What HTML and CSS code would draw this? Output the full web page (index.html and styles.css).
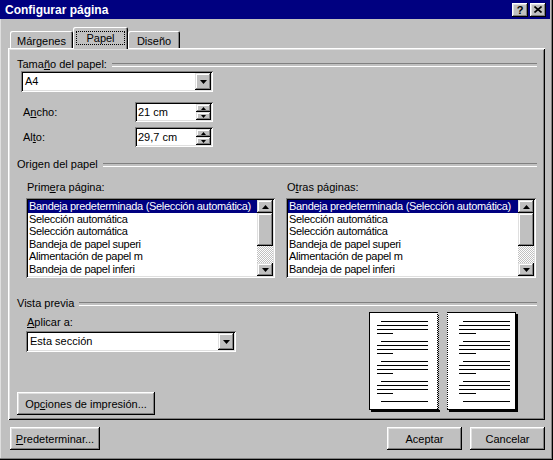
FILE: index.html
```html
<!DOCTYPE html>
<html lang="es">
<head>
    <meta charset="UTF-8">
    <title>Configurar página</title>
    <link rel="stylesheet" href="styles.css">
</head>
<body>
<div class="window">
    <div class="titlebar">
        <span class="title">Configurar página</span>
        <div class="title-buttons">
            <span class="title-btn">?</span>
            <span class="title-btn">
                <svg width="8" height="7" viewBox="0 0 8 7"><path d="M0.5 0.5L7.5 6.5M7.5 0.5L0.5 6.5" stroke="#000" stroke-width="1.6"/></svg>
            </span>
        </div>
    </div>

    <div class="dialog">
        <div class="tabs">
            <div class="tab tab-margenes">Márgenes</div>
            <div class="tab tab-papel active"><span class="focus">Papel</span></div>
            <div class="tab tab-diseno">Diseño</div>
        </div>

        <div class="panel">
            <!-- Tamaño del papel -->
            <div class="group-title">Tama<u>ñ</u>o del papel:</div>
            <div class="combo size-combo">
                <span class="combo-text">A4</span>
                <span class="drop-btn"><svg width="7" height="4"><path d="M0 0h7L3.5 4z"/></svg></span>
            </div>
            <div class="field-row first">
                <label>A<u>n</u>cho:</label>
                <div class="spin">
                    <span class="spin-text">21 cm</span>
                    <span class="spin-btns">
                        <span><svg width="5" height="3"><path d="M2.5 0L5 3H0z"/></svg></span>
                        <span><svg width="5" height="3"><path d="M0 0h5L2.5 3z"/></svg></span>
                    </span>
                </div>
            </div>
            <div class="field-row second">
                <label>Al<u>t</u>o:</label>
                <div class="spin">
                    <span class="spin-text">29,7 cm</span>
                    <span class="spin-btns">
                        <span><svg width="5" height="3"><path d="M2.5 0L5 3H0z"/></svg></span>
                        <span><svg width="5" height="3"><path d="M0 0h5L2.5 3z"/></svg></span>
                    </span>
                </div>
            </div>

            <!-- Origen del papel -->
            <div class="group-title origin">Origen del papel</div>
            <div class="sources">
                <div class="source first-page">
                    <div class="source-label">Prim<u>e</u>ra página:</div>
                    <div class="listbox">
                        <div class="list-items">
                            <div class="selected">Bandeja predeterminada (Selección automática)</div>
                            <div>Selección automática</div>
                            <div>Selección automática</div>
                            <div>Bandeja de papel superi</div>
                            <div>Alimentación de papel m</div>
                            <div>Bandeja de papel inferi</div>
                        </div>
                        <div class="vscroll">
                            <span class="sb-btn"><svg width="7" height="4"><path d="M3.5 0L7 4H0z"/></svg></span>
                            <span class="sb-thumb"></span>
                            <span class="sb-track"></span>
                            <span class="sb-btn"><svg width="7" height="4"><path d="M0 0h7L3.5 4z"/></svg></span>
                        </div>
                    </div>
                </div>
                <div class="source other-pages">
                    <div class="source-label">O<u>t</u>ras páginas:</div>
                    <div class="listbox">
                        <div class="list-items">
                            <div class="selected">Bandeja predeterminada (Selección automática)</div>
                            <div>Selección automática</div>
                            <div>Selección automática</div>
                            <div>Bandeja de papel superi</div>
                            <div>Alimentación de papel m</div>
                            <div>Bandeja de papel inferi</div>
                        </div>
                        <div class="vscroll">
                            <span class="sb-btn"><svg width="7" height="4"><path d="M3.5 0L7 4H0z"/></svg></span>
                            <span class="sb-thumb"></span>
                            <span class="sb-track"></span>
                            <span class="sb-btn"><svg width="7" height="4"><path d="M0 0h7L3.5 4z"/></svg></span>
                        </div>
                    </div>
                </div>
            </div>

            <!-- Vista previa -->
            <div class="group-title preview-title">Vista previa</div>
            <div class="preview-area">
                <div class="apply-col">
                    <div class="apply-label"><u>A</u>plicar a:</div>
                    <div class="combo apply-combo">
                        <span class="combo-text">Esta sección</span>
                        <span class="drop-btn"><svg width="7" height="4"><path d="M0 0h7L3.5 4z"/></svg></span>
                    </div>
                    <div class="btn print-options">Op<u>c</u>iones de impresión...</div>
                </div>
                <svg class="pages" width="150" height="100" viewBox="0 0 150 100">
                    <!-- página izquierda -->
                    <rect x="2" y="98" width="69" height="2" fill="#000"/>
                    <rect x="0" y="0" width="69" height="98" fill="#fff"/>
                    <path d="M0 0.5H69M0.5 0V98M0 97.5H69" stroke="#000" fill="none"/>
                    <path d="M68.5 0V98" stroke="#000" stroke-dasharray="1 1"/>
                    <path d="M69.5 2V100" stroke="#000" stroke-dasharray="1 1" stroke-dashoffset="1"/>
                    <g stroke="#000">
                        <path d="M12 9.5H59M8 13.5H59M8 17.5H59M8 21.5H24"/>
                        <path d="M12 29.5H59M8 33.5H59M8 37.5H59M8 41.5H24"/>
                        <path d="M12 49.5H59M8 53.5H59M8 57.5H59M8 61.5H24"/>
                        <path d="M12 69.5H59M8 73.5H59M8 77.5H59M8 81.5H24"/>
                        <path d="M12 89.5H59"/>
                    </g>
                    <!-- página derecha -->
                    <rect x="80" y="2" width="69" height="98" fill="#000"/>
                    <rect x="78" y="0" width="69" height="98" fill="#fff"/>
                    <path d="M78 0.5H147M146.5 0V98M78 97.5H147" stroke="#000" fill="none"/>
                    <path d="M78.5 0V98" stroke="#000" stroke-dasharray="1 1"/>
                    <g stroke="#000">
                        <path d="M94 9.5H141M90 13.5H141M90 17.5H141M90 21.5H107"/>
                        <path d="M94 29.5H141M90 33.5H141M90 37.5H141M90 41.5H107"/>
                        <path d="M94 49.5H141M90 53.5H141M90 57.5H141M90 61.5H107"/>
                        <path d="M94 69.5H141M90 73.5H141M90 77.5H141M90 81.5H107"/>
                        <path d="M94 89.5H141"/>
                    </g>
                </svg>
            </div>
        </div>

        <div class="buttons">
            <div class="btn btn-default"><u>P</u>redeterminar...</div>
            <div class="btn btn-ok">Aceptar</div>
            <div class="btn btn-cancel">Cancelar</div>
        </div>
    </div>
</div>
</body>
</html>
```

FILE: styles.css
```css
* {
    box-sizing: border-box;
}

body {
    margin: 0;
    background: #c0c0c0;
    font-family: "Liberation Sans", Arial, sans-serif;
    font-size: 11px;
    color: #000;
}

u {
    text-decoration: underline;
    text-underline-offset: 1px;
}

.window {
    width: 553px;
    height: 460px;
    padding: 0 3px 3px 0;
    background: #c0c0c0;
    box-shadow: inset -1px -1px #000, inset -2px -2px #808080, inset 1px 0 #dfdfdf;
    display: flex;
    flex-direction: column;
}

/* barra de titulo */
.titlebar {
    height: 19px;
    background: #000080;
    color: #fff;
    display: flex;
    align-items: center;
    justify-content: space-between;
    padding: 0 4px 0 5px;
}

.title {
    font-weight: bold;
    font-size: 12px;
}

.title-buttons {
    display: flex;
    gap: 2px;
}

.title-btn {
    width: 16px;
    height: 14px;
    background: #c0c0c0;
    color: #000;
    font-weight: bold;
    line-height: 14px;
    display: flex;
    align-items: center;
    justify-content: center;
    box-shadow: inset -1px -1px #000, inset 1px 1px #fff, inset -2px -2px #808080, inset 2px 2px #dfdfdf;
}

/* contenido */
.dialog {
    flex: 1;
    display: flex;
    flex-direction: column;
    padding: 8px 5px 0 8px;
}

.tabs {
    display: flex;
    align-items: flex-end;
    height: 21px;
    padding-left: 2px;
}

.tab {
    height: 17px;
    display: flex;
    align-items: center;
    justify-content: center;
    padding-top: 2px;
    background: #c0c0c0;
    border-radius: 2px 2px 0 0;
    box-shadow: inset 1px 1px #fff, inset -1px 0 #000, inset -2px 0 #808080;
}

.tab-margenes {
    width: 63px;
}

.tab-papel {
    width: 55px;
}

.tab-diseno {
    width: 52px;
}

.tab.active {
    height: 22px;
    margin-bottom: -1px;
    padding-top: 0;
    position: relative;
    z-index: 1;
    align-items: flex-start;
}

.focus {
    margin-top: 4px;
    height: 14px;
    line-height: 12px;
    padding: 0 9px;
    border: 1px dotted #000;
}

.panel {
    height: 372px;
    background: #c0c0c0;
    box-shadow: inset 1px 1px #fff, inset -1px -1px #000, inset 2px 2px #dfdfdf, inset -2px -2px #808080;
    padding: 10px 8px 5px 9px;
    display: flex;
    flex-direction: column;
}

.group-title {
    display: flex;
    align-items: center;
    height: 13px;
    line-height: 13px;
    white-space: nowrap;
}

.group-title::after {
    content: "";
    flex: 1;
    height: 2px;
    margin-left: 5px;
    border-top: 1px solid #808080;
    border-bottom: 1px solid #fff;
}

.group-title.origin {
    margin-top: 11px;
}

.group-title.preview-title {
    margin-top: 19px;
}

/* controles */
.combo {
    display: flex;
    height: 21px;
    padding: 2px;
    background: #fff;
    box-shadow: inset 1px 1px #808080, inset -1px -1px #fff, inset 2px 2px #000, inset -2px -2px #dfdfdf;
}

.combo-text {
    flex: 1;
    padding-left: 2px;
    line-height: 17px;
}

.drop-btn {
    width: 16px;
    height: 17px;
    background: #c0c0c0;
    display: flex;
    align-items: center;
    justify-content: center;
    box-shadow: inset -1px -1px #000, inset 1px 1px #dfdfdf, inset -2px -2px #808080, inset 2px 2px #fff;
}

.size-combo {
    width: 192px;
    margin-left: 4px;
}

.field-row {
    display: flex;
    align-items: center;
    margin-left: 6px;
}

.field-row.first {
    margin-top: 10px;
}

.field-row.second {
    margin-top: 5px;
}

.field-row label {
    width: 112px;
}

.spin {
    width: 78px;
    height: 20px;
    display: flex;
    padding: 2px;
    background: #fff;
    box-shadow: inset 1px 1px #808080, inset -1px -1px #fff, inset 2px 2px #000, inset -2px -2px #dfdfdf;
}

.spin-text {
    flex: 1;
    padding-left: 1px;
    line-height: 16px;
}

.spin-btns {
    width: 15px;
    display: flex;
    flex-direction: column;
}

.spin-btns span {
    flex: 1;
    background: #c0c0c0;
    display: flex;
    align-items: center;
    justify-content: center;
    box-shadow: inset -1px -1px #000, inset 1px 1px #dfdfdf, inset -2px -2px #808080, inset 2px 2px #fff;
}

/* listas de bandejas */
.sources {
    display: flex;
    gap: 11px;
    margin: 10px 0 0 9px;
}

.first-page {
    width: 249px;
}

.other-pages {
    width: 250px;
}

.source-label {
    height: 13px;
    line-height: 13px;
    padding-left: 1px;
}

.listbox {
    height: 80px;
    margin-top: 4px;
    display: flex;
    padding: 2px;
    background: #fff;
    box-shadow: inset 1px 1px #808080, inset -1px -1px #fff, inset 2px 2px #000, inset -2px -2px #dfdfdf;
}

.list-items {
    flex: 1;
    overflow: hidden;
}

.list-items div {
    height: 12.6px;
    line-height: 12px;
    padding-left: 1px;
    white-space: nowrap;
    letter-spacing: -0.3px;
}

.list-items .selected {
    background: #000080;
    color: #fff;
}

.vscroll {
    width: 16px;
    display: flex;
    flex-direction: column;
}

.sb-btn,
.sb-thumb {
    background: #c0c0c0;
    box-shadow: inset -1px -1px #000, inset 1px 1px #dfdfdf, inset -2px -2px #808080, inset 2px 2px #fff;
}

.sb-btn {
    height: 13px;
    display: flex;
    align-items: center;
    justify-content: center;
}

.sb-thumb {
    height: 33px;
}

.sb-track {
    flex: 1;
    background: repeating-conic-gradient(#fff 0 25%, #c0c0c0 0 50%) 0 0 / 2px 2px;
}

/* vista previa */
.preview-area {
    flex: 1;
    display: flex;
}

.apply-col {
    width: 228px;
    display: flex;
    flex-direction: column;
}

.apply-label {
    margin: 6px 0 0 10px;
    height: 13px;
    line-height: 13px;
}

.apply-combo {
    width: 210px;
    margin: 2px 0 0 9px;
}

.pages {
    margin: 2px 0 0 124px;
}

.btn {
    height: 23px;
    background: #c0c0c0;
    display: flex;
    align-items: center;
    justify-content: center;
    box-shadow: inset -1px -1px #000, inset 1px 1px #fff, inset -2px -2px #808080, inset 2px 2px #dfdfdf;
}

.print-options {
    width: 138px;
    margin-top: auto;
}

.buttons {
    display: flex;
    margin-top: 7px;
}

.btn-default {
    width: 90px;
    margin-left: 2px;
}

.btn-ok {
    width: 75px;
    margin-left: auto;
}

.btn-cancel {
    width: 75px;
    margin-left: 8px;
}
```
